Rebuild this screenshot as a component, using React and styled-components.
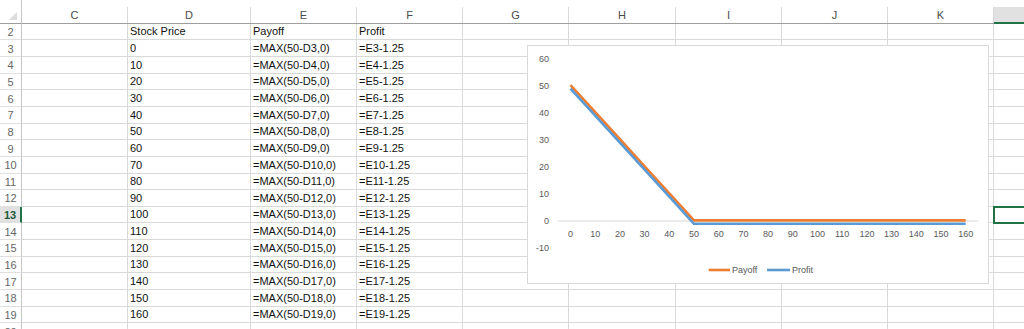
import React from "react";
import styled, { createGlobalStyle } from "styled-components";

const GlobalStyle = createGlobalStyle`
  html, body { margin: 0; padding: 0; background: #fff; overflow: hidden; }
  body { font-family: "Liberation Sans", Arial, sans-serif; }
`;

const GREEN = "#217346";
const GRID = "#d9d9d9";

const Page = styled.div`
  position: relative;
  width: 1024px;
  height: 329px;
  overflow: hidden;
  background: #fff;
`;

const Sheet = styled.div`
  display: grid;
  width: max-content;
  grid-template-columns: 22px 106px 123px 106px 106px 106px 107px 106px 106px 106px 106px;
  grid-template-rows: 23.6px repeat(19, 16.66px);
  font-size: 11px;
`;

const Corner = styled.div`
  box-sizing: border-box;
  border-right: 1px solid #c6c6c6;
  border-bottom: 1px solid #9e9e9e;
  display: flex;
  align-items: flex-end;
  justify-content: flex-end;
  padding: 0 4px 3px 0;
`;

const Triangle = styled.div`
  width: 0;
  height: 0;
  border-left: 8px solid transparent;
  border-bottom: 8px solid #dcdcdc;
`;

const HeaderCell = styled.div`
  box-sizing: border-box;
  padding-top: 7px;
  border-bottom: 1px solid #9e9e9e;
  display: flex;
`;

const HeaderLabel = styled.div`
  flex: 1;
  box-sizing: border-box;
  display: flex;
  align-items: center;
  justify-content: center;
  color: #4a4a4a;
  font-size: 11px;
  border-right: 1px solid ${GRID};
  background: ${(p) => (p.$selected ? "#e1e1e1" : "transparent")};
  margin-bottom: ${(p) => (p.$selected ? "-1px" : "0")};
  border-bottom: ${(p) => (p.$selected ? `2px solid ${GREEN}` : "none")};
`;

const RowHead = styled.div`
  box-sizing: border-box;
  display: flex;
  align-items: center;
  justify-content: center;
  padding-top: 1px;
  border-bottom: 1px solid #e0e0e0;
  border-right: ${(p) => (p.$selected ? `2px solid ${GREEN}` : "1px solid #c6c6c6")};
  background: ${(p) => (p.$selected ? "#e1e1e1" : "#fff")};
  color: ${(p) => (p.$selected ? "#1f5a38" : "#666")};
  font-weight: ${(p) => (p.$selected ? 700 : 400)};
  font-size: 11px;
`;

const Cell = styled.div`
  box-sizing: border-box;
  display: flex;
  align-items: flex-end;
  padding: 0 2px 1px 2px;
  line-height: 13px;
  white-space: nowrap;
  overflow: visible;
  color: #111;
  border-right: 1px solid ${GRID};
  border-bottom: 1px solid ${GRID};
  ${(p) => (p.$active ? `outline: 2px solid ${GREEN}; outline-offset: -1px; position: relative; z-index: 1;` : "")}
`;

const ChartBox = styled.div`
  position: absolute;
  left: 527px;
  top: 45px;
  width: 462px;
  height: 239px;
  box-sizing: border-box;
  border: 1px solid #d9d9d9;
  background: #fff;
  z-index: 2;
`;

const ChartSvg = styled.svg`
  display: block;
  font-family: "Liberation Sans", Arial, sans-serif;
  font-size: 9px;
`;

const COLS = ["C", "D", "E", "F", "G", "H", "I", "J", "K", "L"];

function rowData(r) {
  if (r === 2) return { D: "Stock Price", E: "Payoff", F: "Profit" };
  if (r >= 3 && r <= 19)
    return {
      D: String((r - 3) * 10),
      E: `=MAX(50-D${r},0)`,
      F: `=E${r}-1.25`,
    };
  return {};
}

const X0 = 41.5;
const DX = 24.7;
const Y0 = 174;
const KY = 2.705;
const cats = Array.from({ length: 17 }, (_, i) => i * 10);
const xp = (i) => X0 + i * DX;
const yp = (v) => Y0 - v * KY;

function Chart() {
  const payoff = cats.map((c, i) => `${xp(i)},${yp(Math.max(50 - c, 0)) - 0.6}`).join(" ");
  const profit = cats.map((c, i) => `${xp(i)},${yp(Math.max(50 - c, 0) - 1.25) - 0.6}`).join(" ");
  const yTicks = [60, 50, 40, 30, 20, 10, 0, -10];
  return (
    <ChartSvg width="460" height="237" viewBox="-1 -1 460 237">
      {yTicks.map((v) => (
        <text key={v} x="20" y={yp(v) + 3} textAnchor="end" fill="#595959">
          {v}
        </text>
      ))}
      <line x1="29" y1={Y0} x2="449" y2={Y0} stroke="#d9d9d9" strokeWidth="1" />
      {cats.map((c, i) => (
        <text key={c} x={xp(i)} y="190" textAnchor="middle" fill="#595959">
          {c}
        </text>
      ))}
      <polyline points={payoff} fill="none" stroke="#ED7D31" strokeWidth="2.6" strokeLinejoin="round" />
      <polyline points={profit} fill="none" stroke="#5B9BD5" strokeWidth="2.6" strokeLinejoin="round" />
      <line x1="179.7" y1="223" x2="201" y2="223" stroke="#ED7D31" strokeWidth="2.6" />
      <text x="203" y="226" fill="#595959">Payoff</text>
      <line x1="238" y1="223" x2="261" y2="223" stroke="#5B9BD5" strokeWidth="2.6" />
      <text x="263" y="226" fill="#595959">Profit</text>
    </ChartSvg>
  );
}

export default function App() {
  const rows = Array.from({ length: 19 }, (_, i) => i + 2);
  return (
    <Page>
      <GlobalStyle />
      <Sheet>
        <Corner>
          <Triangle />
        </Corner>
        {COLS.map((c) => (
          <HeaderCell key={c}>
            <HeaderLabel $selected={c === "L"}>{c}</HeaderLabel>
          </HeaderCell>
        ))}
        {rows.map((r) => {
          const d = rowData(r);
          return (
            <React.Fragment key={r}>
              <RowHead $selected={r === 13}>{r}</RowHead>
              {COLS.map((c) => (
                <Cell key={c} $active={r === 13 && c === "L"}>
                  {d[c] || ""}
                </Cell>
              ))}
            </React.Fragment>
          );
        })}
      </Sheet>
      <ChartBox>
        <Chart />
      </ChartBox>
    </Page>
  );
}
